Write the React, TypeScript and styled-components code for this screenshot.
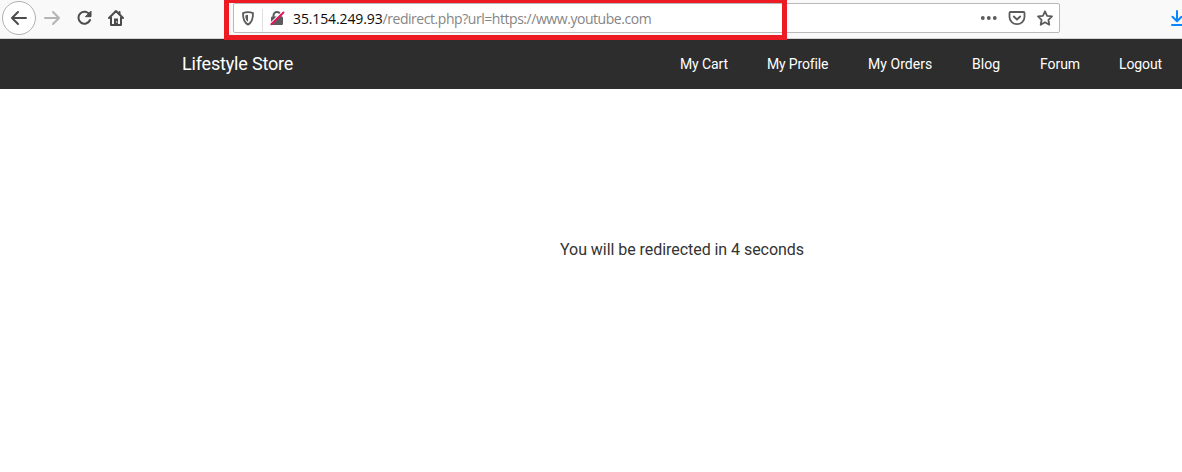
import React from "react";
import styled, { createGlobalStyle } from "styled-components";

const GlobalStyle = createGlobalStyle`
  * { box-sizing: border-box; }
  body { margin: 0; background: #fff; overflow: hidden; }
`;

const Page = styled.div`
  display: flex;
  flex-direction: column;
  height: 472px;
  overflow: hidden;
  position: relative;
  font-family: Roboto, "Liberation Sans", sans-serif;
`;

const Toolbar = styled.header`
  display: flex;
  height: 39px;
  flex: none;
  background: #f9f9fa;
  border-bottom: 1px solid #d4d4d6;
`;

const NavButtons = styled.div`
  display: flex;
  width: 233px;
  flex: none;
`;

const AddressBar = styled.div`
  display: flex;
  align-items: center;
  width: 827px;
  height: 30px;
  margin-top: 3px;
  flex: none;
  background: #fff;
  border: 1px solid #b9b9bc;
  border-radius: 2px;
`;

const SiteIdentity = styled.div`
  display: flex;
  width: 59px;
  flex: none;
`;

const Url = styled.div`
  flex: 1;
  padding-top: 2px;
  font: 14px/20px "Open Sans", "Noto Sans", sans-serif;
  letter-spacing: -0.45px;
  color: #858585;
  white-space: nowrap;
`;

const Host = styled.span`
  color: #0c0c0d;
  letter-spacing: -0.12px;
`;

const Highlight = styled.div`
  position: absolute;
  left: 224px;
  top: 0;
  width: 563px;
  height: 40px;
  border: 5px solid #ed1c24;
  border-top-width: 3px;
`;

const Downloads = styled.div`
  margin-left: auto;
  width: 14px;
  overflow: hidden;
`;

const SiteHeader = styled.nav`
  display: flex;
  justify-content: space-between;
  align-items: center;
  height: 50px;
  flex: none;
  padding: 0 20px 0 182px;
  background: #2d2d2d;
  color: #fff;
`;

const Brand = styled.div`
  font-size: 18px;
  line-height: 24px;
  letter-spacing: -0.18px;
`;

const Links = styled.div`
  display: flex;
  gap: 40px;
`;

const NavLink = styled.a<{ $width: number; $spacing: number }>`
  width: ${(p) => p.$width}px;
  letter-spacing: ${(p) => p.$spacing}px;
  font-size: 14px;
  line-height: 20px;
  white-space: nowrap;
`;

const Content = styled.main`
  padding: 150px 0 0 182px;
  text-align: center;
`;

const Message = styled.p`
  margin: 0;
  font-size: 16px;
  line-height: 22px;
  letter-spacing: -0.05px;
  color: #333;
`;

const links: [string, number, number][] = [
  ["My Cart", 47, -0.1],
  ["My Profile", 61, -0.15],
  ["My Orders", 64, 0.05],
  ["Blog", 28, 0.05],
  ["Forum", 39, -0.05],
  ["Logout", 43, -0.1],
];

const NavigationIcons = () => (
  <svg width="140" height="38" fill="none" stroke="#4c4c4e" strokeWidth="2" strokeLinecap="round" strokeLinejoin="round">
    <circle cx="19" cy="18" r="16.5" fill="#fff" stroke="#b1b1b3" strokeWidth="1" />
    <path d="M12 18H26M18 12l-6 6 6 6" />
    <path d="M45 18H59M53 12l6 6-6 6" stroke="#b4b4b5" />
    <path d="M89.7 14.8A6 6 0 1 0 90 20" />
    <path d="M91 11.500v5.200h-5.200z" fill="#4c4c4e" strokeWidth="1" />
    <path d="M109 18l7-7 7 7M111 17v8h10v-8" />
    <path d="M119.500 12v2" />
    <path d="M114 25v-6.500h4V25z" fill="#4c4c4e" stroke="none" />
    <circle cx="116.700" cy="22" r=".7" fill="#fff" stroke="none" />
  </svg>
);

const IdentityIcons = () => (
  <svg width="59" height="28" fill="none">
    <path d="M14 8.200c1.700 0 3.500.4 5 1 .1 5.500-1 9.200-5 11.400C10 18.400 8.900 14.700 9 9.200c1.500-.6 3.300-1 5-1z" stroke="#5b5b5d" strokeWidth="1.800" strokeLinejoin="round" />
    <path d="M14 10.800v7c-2-1.500-2.700-3.600-2.700-6.400.8-.4 1.800-.6 2.700-.6z" fill="#5b5b5d" />
    <path d="M28.500 5v22" stroke="#dededf" />
    <path d="M39.500 13v-1.500a3.500 3.500 0 0 1 7 0V13" stroke="#5b5b5d" strokeWidth="2" />
    <rect x="37" y="12.500" width="12" height="8.500" rx="1.200" fill="#5b5b5d" />
    <path d="M36.600 19.200L48 8" stroke="#fff" strokeWidth="1.200" />
    <path d="M37.300 20.300L49.500 8.500" stroke="#e4155b" strokeWidth="1.900" strokeLinecap="round" />
  </svg>
);

const PageActions = () => (
  <svg width="85" height="28" fill="none" stroke="#5b5b5d" strokeWidth="1.800" strokeLinecap="round" strokeLinejoin="round">
    <g fill="#5b5b5d" stroke="none">
      <circle cx="8.800" cy="14" r="1.900" />
      <circle cx="14.800" cy="14" r="1.900" />
      <circle cx="20.800" cy="14" r="1.900" />
    </g>
    <path d="M36.500 8h13q1 0 1 1v4a7.500 7.200 0 0 1-15 0V9q0-1 1-1z" />
    <path d="M39.800 12.500l3.200 3 3.200-3" />
    <path d="M71 7.300l2.100 4.500 4.900.6-3.600 3.400.9 4.900-4.300-2.400-4.300 2.400.9-4.900-3.600-3.400 4.900-.6z" />
  </svg>
);

const DownloadIcon = () => (
  <svg width="18" height="38" fill="none" stroke="#0a84ff" strokeWidth="2" strokeLinecap="round" strokeLinejoin="round">
    <path d="M9 11v10M4.500 16.800L9 21.300l4.500-4.500M4 25h10" />
  </svg>
);

export default function App() {
  return (
    <Page>
      <GlobalStyle />
      <Toolbar>
        <NavButtons>
          <NavigationIcons />
        </NavButtons>
        <AddressBar>
          <SiteIdentity>
            <IdentityIcons />
          </SiteIdentity>
          <Url>
            <Host>35.154.249.93</Host>/redirect.php?url=https://www.youtube.com
          </Url>
          <PageActions />
        </AddressBar>
        <Downloads>
          <DownloadIcon />
        </Downloads>
      </Toolbar>
      <SiteHeader>
        <Brand>Lifestyle Store</Brand>
        <Links>
          {links.map(([label, width, spacing]) => (
            <NavLink key={label} $width={width} $spacing={spacing}>
              {label}
            </NavLink>
          ))}
        </Links>
      </SiteHeader>
      <Content>
        <Message>You will be redirected in 4 seconds</Message>
      </Content>
      <Highlight />
    </Page>
  );
}
